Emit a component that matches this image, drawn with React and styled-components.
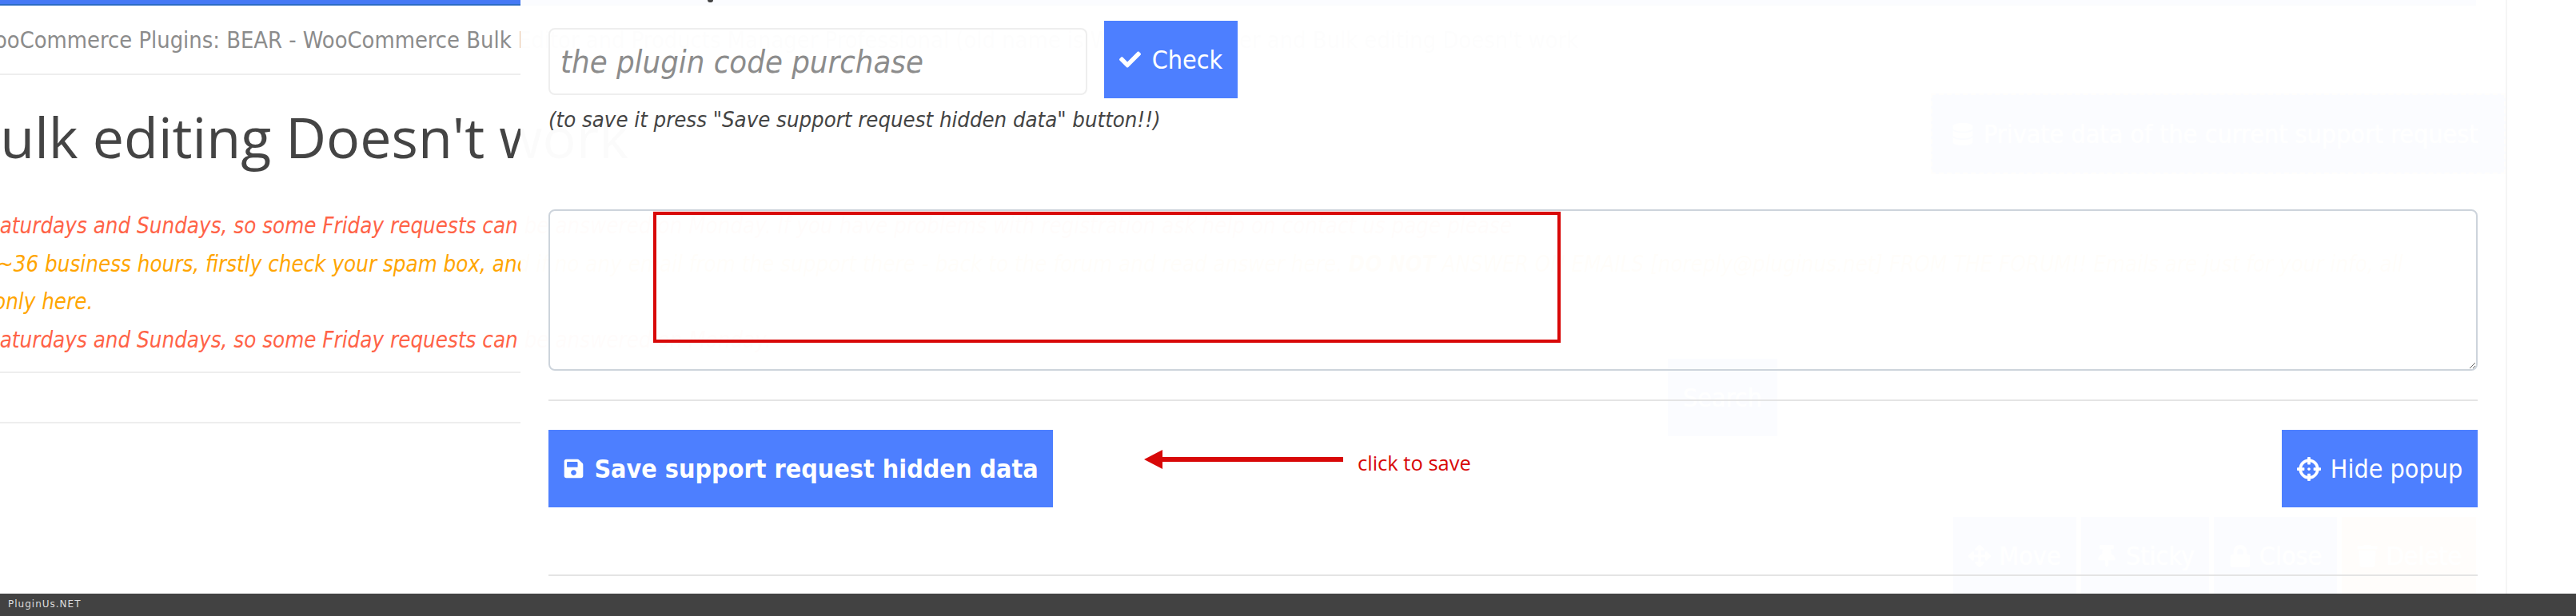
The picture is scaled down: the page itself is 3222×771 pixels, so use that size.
import React from 'react';
import styled, { createGlobalStyle } from 'styled-components';
import { FaCheck, FaSave, FaCrosshairs, FaDatabase, FaArrowsAlt, FaThumbtack, FaLock, FaTrash } from 'react-icons/fa';

const BLUE = '#4d7fff';
const SANS = '"DejaVu Sans Condensed", "DejaVu Sans", Verdana, sans-serif';

const GlobalStyle = createGlobalStyle`
  html, body { margin: 0; padding: 0; background: #fff; overflow: hidden; }
  body { font-family: ${SANS}; color: #444; }
  * { box-sizing: border-box; }
`;

const Screen = styled.div`
  position: relative;
  width: 3222px;
  height: 771px;
  overflow: hidden;
`;

// page behind the popup
const Page = styled.div`
  width: 3136px;
  height: 743px;
  overflow: hidden;
  border-right: 2px solid #f5f5f5;
`;

const TopBar = styled.div`
  width: 3097px;
  height: 7px;
  background: #4579f5;
  border-bottom: 2px solid #2c6cc4;
`;

const Crumb = styled.div`
  width: 3097px;
  height: 87px;
  padding-top: 26px;
  margin-bottom: 1px;
  font-size: 28.8px;
  line-height: 34px;
  color: #8c8c8c;
  white-space: nowrap;
  text-indent: -31px;
  overflow: hidden;
  border-bottom: 2px solid #eee;
`;

const TitleRow = styled.div`
  display: flex;
  justify-content: space-between;
  align-items: flex-start;
  height: 164px;
`;

const Title = styled.h1`
  margin: 36px 0 0 -45px;
  font-family: "Open Sans", sans-serif;
  font-size: 70px;
  font-weight: 400;
  line-height: 80px;
  color: #444;
  white-space: nowrap;
`;

const PrivateBadge = styled.div`
  display: flex;
  align-items: center;
  gap: 12px;
  width: 719px;
  height: 101px;
  margin-top: 22px;
  padding-left: 24px;
  font-size: 32px;
  color: #fff;
  background: ${BLUE};
  border: 2px dashed #ffb866;
  white-space: nowrap;
`;

const Notices = styled.div`
  width: 3097px;
`;

const Notice = styled.div`
  margin-left: ${props => props.$shift}px;
  font-size: 27.5px;
  font-style: italic;
  line-height: 47.6px;
  color: ${props => props.$tone};
  white-space: nowrap;
`;

const SearchRow = styled.div`
  display: flex;
  justify-content: flex-end;
  align-items: center;
  width: 3097px;
  height: 65px;
  padding-right: 874px;
  margin-top: 16px;
  border-top: 2px solid #eee;
  border-bottom: 2px solid #eee;
`;

const PageButton = styled.div`
  display: flex;
  align-items: center;
  justify-content: center;
  gap: 10px;
  flex: none;
  width: ${props => props.$w}px;
  height: 97px;
  font-size: 32px;
  color: #fff;
  background: ${props => props.$bg || BLUE};
`;

const Toolbar = styled.div`
  display: flex;
  justify-content: flex-end;
  gap: 6px;
  width: 3097px;
  margin-top: 117px;
`;

// popup
const Popup = styled.div`
  position: absolute;
  top: 0;
  left: 651px;
  width: 2483px;
  height: 743px;
  padding: 0 35px;
  overflow: hidden;
  background: rgba(255, 255, 255, 0.98);
`;

const Descender = styled.div`
  width: 7px;
  height: 3px;
  margin-left: 199px;
  background: #444;
  border-radius: 0 0 4px 4px;
`;

const CodeRow = styled.div`
  display: flex;
  align-items: flex-start;
  gap: 21px;
  margin-top: 23px;
`;

const CodeInput = styled.input`
  width: 674px;
  height: 84px;
  margin-top: 9px;
  padding: 0 13px;
  font-family: ${SANS};
  font-size: 39.7px;
  font-style: italic;
  background: transparent;
  border: 2px solid #eee;
  border-radius: 8px;
  outline: none;

  &::placeholder {
    color: #8c8c8c;
    opacity: 1;
  }
`;

const Button = styled.button`
  display: flex;
  align-items: center;
  justify-content: center;
  gap: ${props => props.$gap || 12}px;
  width: ${props => props.$w}px;
  height: ${props => props.$h || 97}px;
  padding: 0;
  font-family: ${SANS};
  font-size: 32px;
  font-weight: ${props => (props.$bold ? 700 : 400)};
  color: #fff;
  background: ${BLUE};
  border: 0;
  white-space: nowrap;
`;

const SaveNote = styled.div`
  margin-top: 11px;
  font-size: 27.3px;
  font-style: italic;
  line-height: 32px;
  color: #444;
`;

const Message = styled.textarea`
  display: block;
  width: 2413px;
  height: 202px;
  margin-top: 96px;
  background: transparent;
  border: 2px solid #cdd4dc;
  border-radius: 8px;
  outline: none;
`;

const Rule = styled.div`
  height: 2px;
  margin-top: ${props => props.$top}px;
  background: #e4e4e4;
`;

const Actions = styled.div`
  display: flex;
  justify-content: space-between;
  margin-top: 36px;
`;

// red marks drawn on top of the screenshot
const RedBox = styled.div`
  position: absolute;
  top: 265px;
  left: 817px;
  width: 1135px;
  height: 164px;
  border: 4px solid #d80808;
  box-shadow: 0 0 1px #f3b0b0;
`;

const RedArrow = styled.svg`
  position: absolute;
  top: 560px;
  left: 1431px;
`;

const RedLabel = styled.div`
  position: absolute;
  top: 562px;
  left: 1698px;
  font-family: "Open Sans", sans-serif;
  font-size: 25.5px;
  line-height: 34px;
  color: #d80808;
`;

const Footer = styled.div`
  position: absolute;
  left: 0;
  right: 0;
  bottom: 0;
  height: 28px;
  padding-left: 10px;
  font-family: "DejaVu Sans", sans-serif;
  font-size: 12px;
  line-height: 27px;
  letter-spacing: 1px;
  color: #ddd;
  background: #424242;
`;

const RED = '#ff6347';
const ORANGE = '#ffa500';

export default function App() {
  return (
    <Screen>
      <GlobalStyle />
      <Page>
        <TopBar />
        <Crumb>WooCommerce Plugins: BEAR - WooCommerce Bulk Editor and Products Manager Professional (old name is WOOBE) &gt; Filter and Bulk editing Doesn't work</Crumb>
        <TitleRow>
          <Title>Bulk editing Doesn't work</Title>
          <PrivateBadge><FaDatabase size={28} /> Private data of the current support request</PrivateBadge>
        </TitleRow>
        <Notices>
          <Notice $tone={RED} $shift={-16}>Saturdays and Sundays, so some Friday requests can be answered on Monday. If you have problems with registration ask help on contact us page please</Notice>
          <Notice $tone={ORANGE} $shift={-4}>~36 business hours, firstly check your spam box, and if no any email from the support there - back to the forum and read answer here. <b>DO NOT</b> ANSWER ON EMAILS [noreply@pluginus.net] FROM THE FORUM!! Emails are just for your info, all</Notice>
          <Notice $tone={ORANGE} $shift={-8}>only here.</Notice>
          <Notice $tone={RED} $shift={-16}>Saturdays and Sundays, so some Friday requests can be answered on Monday.</Notice>
        </Notices>
        <SearchRow>
          <PageButton $w={137}>Search</PageButton>
        </SearchRow>
        <Toolbar>
          <PageButton $w={154}><FaArrowsAlt size={28} /> Move</PageButton>
          <PageButton $w={160}><FaThumbtack size={28} /> Sticky</PageButton>
          <PageButton $w={154}><FaLock size={28} /> Close</PageButton>
          <PageButton $w={168} $bg="#ffa94d"><FaTrash size={28} /> Delete</PageButton>
        </Toolbar>
      </Page>

      <Popup>
        <Descender />
        <CodeRow>
          <CodeInput placeholder="the plugin code purchase" />
          <Button $w={167} $gap={14}><FaCheck size={27} /> Check</Button>
        </CodeRow>
        <SaveNote>(to save it press "Save support request hidden data" button!!)</SaveNote>
        <Message />
        <Rule $top={36} />
        <Actions>
          <Button $w={631} $bold $gap={12}><FaSave size={27} /> Save support request hidden data</Button>
          <Button $w={245} $gap={12}><FaCrosshairs size={30} /> Hide popup</Button>
        </Actions>
        <Rule $top={84} />
      </Popup>

      <RedBox />
      <RedArrow width="250" height="30" viewBox="0 0 250 30">
        <path d="M0 15 L23 3 L23 12 L249 12 L249 18 L23 18 L23 27 Z" fill="#d80808" />
      </RedArrow>
      <RedLabel>click to save</RedLabel>
      <Footer>PluginUs.NET</Footer>
    </Screen>
  );
}
